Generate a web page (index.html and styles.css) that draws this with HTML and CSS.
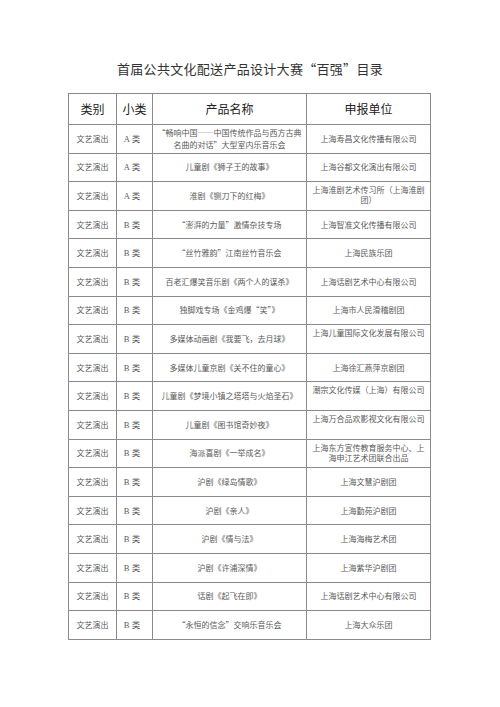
FILE: index.html
```html
<!DOCTYPE html>
<html lang="zh-CN">
<head>
<meta charset="utf-8">
<title>首届公共文化配送产品设计大赛“百强”目录</title>
<link rel="stylesheet" href="styles.css">
</head>
<body>
<div class="page">
  <h1 class="title">首届公共文化配送产品设计大赛“百强”目录</h1>
  <table class="list">
    <colgroup>
      <col class="c1"><col class="c2"><col class="c3"><col class="c4">
    </colgroup>
    <thead>
      <tr><th>类别</th><th>小类</th><th>产品名称</th><th>申报单位</th></tr>
    </thead>
    <tbody>
      <tr><td>文艺演出</td><td class="sub">A 类</td><td class="two">“畅响中国——中国传统作品与西方古典<br>名曲的对话”大型室内乐音乐会</td><td>上海寿昌文化传播有限公司</td></tr>
      <tr><td>文艺演出</td><td class="sub">A 类</td><td>儿童剧《狮子王的故事》</td><td>上海谷都文化演出有限公司</td></tr>
      <tr><td>文艺演出</td><td class="sub">A 类</td><td>淮剧《铡刀下的红梅》</td><td class="top">上海淮剧艺术传习所（上海淮剧<br>团）</td></tr>
      <tr><td>文艺演出</td><td class="sub">B 类</td><td>“澎湃的力量”激情杂技专场</td><td>上海智准文化传播有限公司</td></tr>
      <tr><td>文艺演出</td><td class="sub">B 类</td><td>“丝竹雅韵”江南丝竹音乐会</td><td>上海民族乐团</td></tr>
      <tr><td>文艺演出</td><td class="sub">B 类</td><td>百老汇爆笑音乐剧《两个人的谋杀》</td><td>上海话剧艺术中心有限公司</td></tr>
      <tr><td>文艺演出</td><td class="sub">B 类</td><td>独脚戏专场《金鸡爆“笑”》</td><td>上海市人民滑稽剧团</td></tr>
      <tr><td>文艺演出</td><td class="sub">B 类</td><td>多媒体动画剧《我要飞，去月球》</td><td class="top">上海儿童国际文化发展有限公司</td></tr>
      <tr><td>文艺演出</td><td class="sub">B 类</td><td>多媒体儿童京剧《关不住的童心》</td><td>上海徐汇燕萍京剧团</td></tr>
      <tr><td>文艺演出</td><td class="sub">B 类</td><td>儿童剧《梦境小镇之塔塔与火焰圣石》</td><td class="top">潮宗文化传媒（上海）有限公司</td></tr>
      <tr><td>文艺演出</td><td class="sub">B 类</td><td>儿童剧《图书馆奇妙夜》</td><td class="top">上海万合品欢影视文化有限公司</td></tr>
      <tr><td>文艺演出</td><td class="sub">B 类</td><td>海派喜剧《一举成名》</td><td class="top">上海东方宣传教育服务中心、上<br>海申江艺术团联合出品</td></tr>
      <tr><td>文艺演出</td><td class="sub">B 类</td><td>沪剧《绿岛情歌》</td><td>上海文慧沪剧团</td></tr>
      <tr><td>文艺演出</td><td class="sub">B 类</td><td>沪剧《亲人》</td><td>上海勤苑沪剧团</td></tr>
      <tr><td>文艺演出</td><td class="sub">B 类</td><td>沪剧《情与法》</td><td>上海海梅艺术团</td></tr>
      <tr><td>文艺演出</td><td class="sub">B 类</td><td>沪剧《许浦深情》</td><td>上海紫华沪剧团</td></tr>
      <tr><td>文艺演出</td><td class="sub">B 类</td><td>话剧《起飞在即》</td><td>上海话剧艺术中心有限公司</td></tr>
      <tr><td>文艺演出</td><td class="sub">B 类</td><td>“永恒的信念”交响乐音乐会</td><td>上海大众乐团</td></tr>
    </tbody>
  </table>
</div>
</body>
</html>
```

FILE: styles.css
```css
html, body {
  margin: 0;
  padding: 0;
  background: #ffffff;
}

body {
  font-family: "Noto Sans CJK SC", "Noto Sans", sans-serif;
  color: #444;
}

.page {
  width: 500px;
  padding-top: 61px;
  display: flex;
  flex-direction: column;
  align-items: center;
}

.title {
  margin: 0 0 16px 0;
  font-size: 13px;
  line-height: 16px;
  font-weight: 400;
  letter-spacing: 0.3px;
  color: #333;
}

.list {
  border-collapse: collapse;
  table-layout: fixed;
  width: 362px;
  margin-left: -1px;
}

.c1 { width: 48px; }
.c2 { width: 36px; }
.c3 { width: 154px; }
.c4 { width: 124px; }

.list th,
.list td {
  border: 1px solid #8a8a8a;
  text-align: center;
  vertical-align: middle;
  padding: 0 3px;
  overflow: hidden;
  white-space: nowrap;
}

.list thead tr {
  height: 31px;
}

.list th {
  font-size: 12px;
  font-weight: 400;
  color: #222;
  line-height: 14px;
}

.list tbody tr {
  height: 28.6px;
}

.list td {
  font-size: 8px;
  line-height: 10px;
  color: #5a5a5a;
}

.list td.sub {
  font-family: "Liberation Serif", "Noto Sans CJK SC", serif;
  font-size: 8.5px;
  padding-right: 8px;
}

.list td.two {
  line-height: 12px;
}

.list td.top {
  vertical-align: top;
  padding-top: 3px;
}
```
